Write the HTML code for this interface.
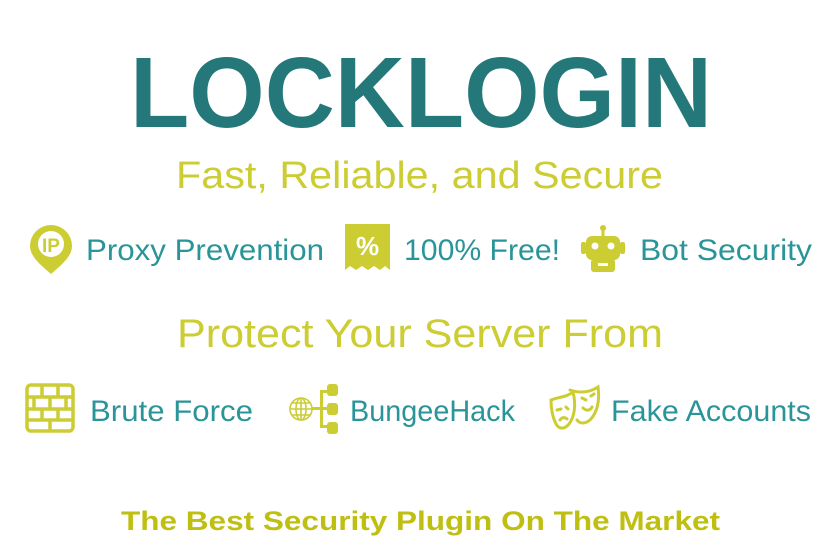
<!DOCTYPE html>
<html><head><meta charset="utf-8"><style>
html,body{margin:0;padding:0;background:#fff;width:840px;height:560px;overflow:hidden}
svg{display:block}
text{font-family:"Liberation Sans",sans-serif}
</style></head><body>
<svg width="840" height="560" viewBox="0 0 840 560">
<text x="130" y="127" font-size="100" font-weight="bold" fill="#25787a" textLength="582" lengthAdjust="spacingAndGlyphs">LOCKLOGIN</text>
<text x="176" y="188" font-size="38" fill="#cccc33" textLength="487" lengthAdjust="spacingAndGlyphs">Fast, Reliable, and Secure</text>

<!-- IP pin -->
<g fill="#cccc33">
<path d="M51 225a21 21 0 0 1 21 21c0 11-12 20-21 28c-9-8-21-17-21-28a21 21 0 0 1 21-21z"/>
</g>
<circle cx="51" cy="244" r="13" fill="#fff"/>
<text x="42" y="252" font-size="19" font-weight="bold" fill="#cccc33">IP</text>
<text x="86" y="260" font-size="30" fill="#2a9599" textLength="238" lengthAdjust="spacingAndGlyphs">Proxy Prevention</text>

<!-- receipt -->
<path d="M345 224h45v46l-5-4-5 4-6-4-6 4-6-4-6 4-6-4-5 4z" fill="#cccc33"/>
<text x="356" y="255" font-size="26" font-weight="bold" fill="#fff">%</text>
<text x="404" y="260" font-size="30" fill="#2a9599" textLength="156" lengthAdjust="spacingAndGlyphs">100% Free!</text>

<!-- robot -->
<g fill="#cccc33">
<circle cx="603" cy="228" r="3"/><rect x="601.5" y="228" width="3" height="8"/>
<rect x="586" y="236" width="34" height="24" rx="6"/>
<rect x="581" y="242" width="5" height="12" rx="2"/><rect x="620" y="242" width="5" height="12" rx="2"/>
<rect x="591" y="259" width="24" height="13" rx="3"/>
</g>
<circle cx="595" cy="246" r="3.5" fill="#fff"/><circle cx="611" cy="246" r="3.5" fill="#fff"/>
<rect x="598" y="263" width="10" height="3" fill="#fff"/>
<text x="640" y="260" font-size="30" fill="#2a9599" textLength="172" lengthAdjust="spacingAndGlyphs">Bot Security</text>

<text x="177" y="347" font-size="40" fill="#cccc33" textLength="486" lengthAdjust="spacingAndGlyphs">Protect Your Server From</text>

<!-- wall -->
<g fill="none" stroke="#cccc33" stroke-width="3.5">
<rect x="27" y="385" width="46" height="46" rx="4"/>
<path d="M27 397h46M27 409h46M27 420h46M42 385v12M58 385v12M34 397v12M50 397v12M66 397v12M42 409v11M58 409v11M50 420v11"/>
</g>
<text x="90" y="421" font-size="30" fill="#2a9599" textLength="163" lengthAdjust="spacingAndGlyphs">Brute Force</text>

<!-- globe net -->
<g fill="none" stroke="#cccc33" stroke-width="1.6">
<circle cx="301" cy="409" r="11"/><ellipse cx="301" cy="409" rx="5" ry="11"/>
<path d="M290 409h22M292 403h18M292 415h18M301 398v22"/>
</g>
<g fill="#cccc33">
<rect x="312" y="407" width="10" height="3"/><rect x="320" y="390" width="3" height="38"/>
<rect x="321" y="390" width="7" height="3"/><rect x="321" y="407" width="7" height="3"/><rect x="321" y="425" width="7" height="3"/>
<rect x="327" y="384" width="11" height="12" rx="3"/><rect x="327" y="403" width="11" height="12" rx="3"/><rect x="327" y="422" width="11" height="12" rx="3"/>
</g>
<text x="350" y="421" font-size="30" fill="#2a9599" textLength="165" lengthAdjust="spacingAndGlyphs">BungeeHack</text>

<!-- masks -->
<g fill="none" stroke="#cccc33" stroke-width="3" stroke-linecap="round">
<path d="M551 400c8-3 16-3 22-8c3 12 2 24-4 32c-5 6-10 5-13 0c-4-8-5-16-5-24z"/>
<path d="M570 390c9 3 19 3 28-3c2 14-1 26-8 33c-5 4-10 4-13 0"/>
<path d="M582 398l4 2M591 396l3-2M583 408c3 3 7 3 9-1M557 410l4-1M566 407l2 2M560 420c2-3 5-3 7-1"/>
</g>
<text x="611" y="421" font-size="30" fill="#2a9599" textLength="200" lengthAdjust="spacingAndGlyphs">Fake Accounts</text>

<text x="121" y="530" font-size="27" font-weight="bold" fill="#bfbf12" textLength="599" lengthAdjust="spacingAndGlyphs">The Best Security Plugin On The Market</text>
</svg>
</body></html>
